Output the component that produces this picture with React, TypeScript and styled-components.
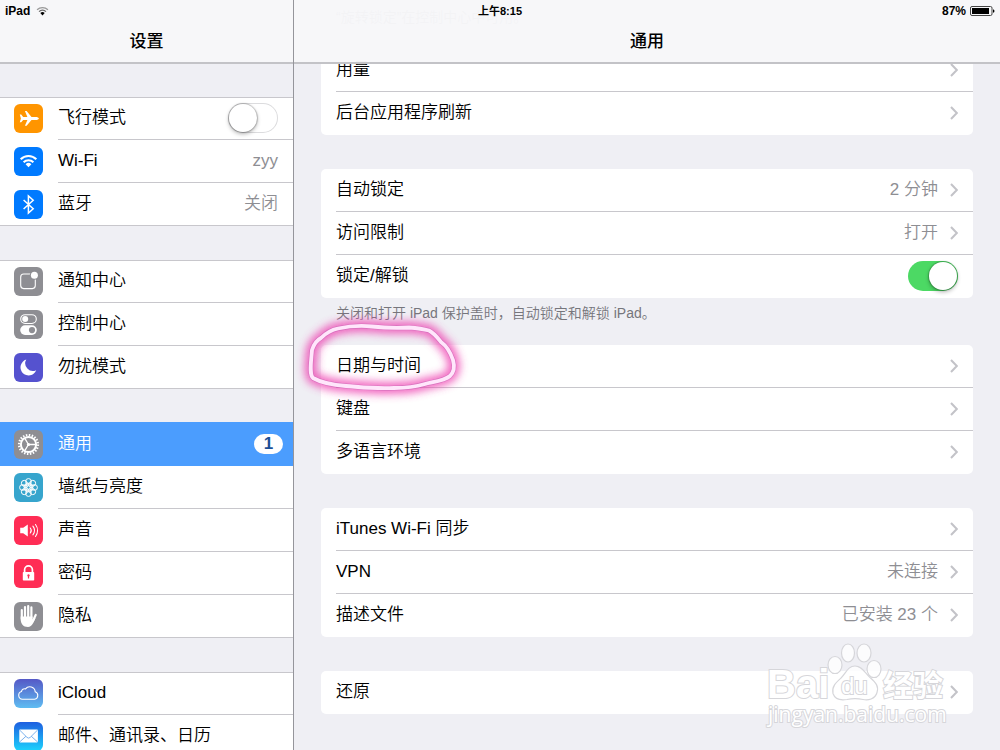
import React, { ReactNode } from 'react';
import styled, { createGlobalStyle } from 'styled-components';

const fontStack = `"Liberation Sans", "Noto Sans CJK SC", sans-serif`;
const line = '#c8c7cc';

const GlobalStyle = createGlobalStyle`
  *, *::before, *::after { box-sizing: border-box; }
  body {
    margin: 0;
    background: #efeff4;
    color: #000;
    font-family: ${fontStack};
    font-size: 17px;
    font-weight: 350;
    line-height: 24px;
  }
  a { color: inherit; text-decoration: none; }
  ul { list-style: none; margin: 0; padding: 0; }
`;

/* ---------- frame ---------- */

const Screen = styled.div`
  position: relative;
  display: grid;
  grid-template-columns: 294px 1fr;
  height: 100vh;
  overflow: hidden;
`;

const StatusBar = styled.div`
  position: absolute;
  inset: 0 0 auto;
  z-index: 3;
  display: grid;
  grid-template-columns: 1fr auto 1fr;
  align-items: center;
  height: 21px;
  padding: 0 5px;
  font-size: 12px;
  font-weight: 700;
  line-height: 16px;
`;

const StatusItem = styled.div<{ $end?: boolean }>`
  display: flex;
  align-items: center;
  justify-content: ${(p) => (p.$end ? 'flex-end' : 'flex-start')};
  gap: ${(p) => (p.$end ? 4 : 6)}px;
`;

const Clock = styled.time`
  font-size: 11px;
`;

const Pane = styled.section<{ $side?: boolean }>`
  position: relative;
  min-width: 0;
  height: 100vh;
  border-right: ${(p) => (p.$side ? '1px solid #95959b' : '0')};
`;

const PaneHeader = styled.header`
  position: absolute;
  inset: 0 0 auto;
  z-index: 2;
  display: flex;
  align-items: flex-end;
  justify-content: center;
  height: 64px;
  padding-bottom: 8px;
  background: rgba(247, 247, 249, 0.97);
  border-bottom: 2px solid #c3c3c7;
`;

const Title = styled.h1`
  margin: 0;
  font-size: 17px;
  font-weight: 500;
  line-height: 24px;
`;

const Scroller = styled.div<{ $side?: boolean }>`
  height: 100%;
  overflow-y: auto;
  scrollbar-width: none;
  padding: ${(p) => (p.$side ? '97px 0 0' : '2px 27px 34px')};
`;

/* ---------- sidebar ---------- */

const SideGroup = styled.ul`
  margin-bottom: 34px;
  background: #fff;
  box-shadow: inset 0 1px 0 ${line}, inset 0 -1px 0 ${line};
`;

const SideItem = styled.li<{ $selected?: boolean }>`
  background: ${(p) => (p.$selected ? '#4b9dfe' : 'transparent')};
  box-shadow: ${(p) => (p.$selected ? '0 -1px 0 #4b9dfe' : 'none')};
  color: ${(p) => (p.$selected ? '#fff' : '#000')};
`;

const SideLink = styled.a`
  display: flex;
  align-items: center;
  gap: 15px;
  padding-left: 14px;
`;

const SideToggleRow = styled(SideLink).attrs({ as: 'label' })``;

const SideBody = styled.span<{ $last?: boolean; $badge?: boolean }>`
  flex: 1;
  display: flex;
  align-items: center;
  justify-content: space-between;
  height: 43px;
  padding-right: ${(p) => (p.$badge ? 10 : 15)}px;
  border-bottom: 1px solid ${(p) => (p.$last ? 'transparent' : line)};
`;

const Value = styled.span`
  color: #8e8e93;
`;

const Badge = styled.span`
  width: 29px;
  height: 20px;
  border-radius: 10px;
  background: #fff;
  color: #1c4f96;
  font-weight: 700;
  line-height: 20px;
  text-align: center;
`;

/* ---------- detail ---------- */

const Card = styled.ul`
  background: #fff;
  border-radius: 5px;

  & + & { margin-top: 34px; }
`;

const CardItem = styled.li`
  position: relative;
  padding-left: 15px;

  &:not(:last-child) > :first-child { border-bottom-color: ${line}; }
`;

const CardLink = styled.a`
  display: flex;
  align-items: center;
  gap: 12px;
  height: 43px;
  padding-right: 15px;
  border-bottom: 1px solid transparent;
`;

const CardToggleRow = styled(CardLink).attrs({ as: 'label' })``;

const Label = styled.span`
  flex: 1;
`;

const Footnote = styled.p`
  margin: 0;
  padding: 6px 15px 23px;
  color: #76767c;
  font-size: 14px;
  line-height: 18px;
`;

const Switch = styled.input.attrs({ type: 'checkbox', role: 'switch' })`
  appearance: none;
  display: flex;
  align-items: center;
  flex: none;
  width: 50px;
  height: 30px;
  margin: 0;
  padding: 0 1px;
  border-radius: 15px;
  background: #fff;
  box-shadow: inset 0 0 0 1px #dcdcde;

  &::before {
    content: '';
    width: 28px;
    height: 28px;
    border-radius: 50%;
    background: #fff;
    box-shadow: 0 0 1px 1px rgba(0, 0, 0, 0.2), 0 2px 4px rgba(0, 0, 0, 0.3);
  }

  &:checked {
    justify-content: flex-end;
    background: #4cd964;
    box-shadow: none;
  }
`;

const Ring = styled.svg`
  position: absolute;
  left: -21px;
  top: -30px;
  z-index: 1;
  width: 180px;
  height: 100px;
  overflow: visible;
  pointer-events: none;
`;

const Watermark = styled.svg`
  position: absolute;
  right: 50px;
  bottom: 14px;
  z-index: 4;
  width: 190px;
  height: 100px;
  pointer-events: none;
`;

/* ---------- icons ---------- */

const IconSvg = styled.svg`
  flex: none;
  display: block;
  width: 29px;
  height: 29px;
`;

function Tile({ fill, to, id, children }: { fill: string; to?: string; id?: string; children: ReactNode }) {
  return (
    <IconSvg viewBox="0 0 29 29" aria-hidden="true">
      {to && (
        <linearGradient id={id} x1="0" y1="0" x2="0" y2="1">
          <stop offset="0" stopColor={fill} />
          <stop offset="1" stopColor={to} />
        </linearGradient>
      )}
      <rect width="29" height="29" rx="6" fill={to ? `url(#${id})` : fill} />
      {children}
    </IconSvg>
  );
}

const PlaneIcon = () => (
  <Tile fill="#ff9500">
    <path
      fill="#fff"
      d="M24.9 14.4c0-.9-1.5-1.5-3.2-1.5h-4.2L12.6 7h-1.7l2.5 5.9H9.2L7.2 10.6H5.8l1.1 3.8-1.1 3.8h1.4l2-2.3h4.2l-2.5 5.9h1.7l4.9-5.9h4.2c1.7 0 3.2-.6 3.2-1.5z"
    />
  </Tile>
);

const WifiIcon = () => (
  <Tile fill="#007aff">
    <g fill="none" stroke="#fff" strokeWidth="2.1">
      <path d="M6.7 12.3a11 11 0 0 1 15.6 0" />
      <path d="M9.6 15.2a7 7 0 0 1 9.8 0" />
    </g>
    <path d="M14.5 20.3l-2.9-3a4.1 4.1 0 0 1 5.8 0z" fill="#fff" />
  </Tile>
);

const BluetoothIcon = () => (
  <Tile fill="#007aff">
    <path d="M9.6 10l9.6 8.8-4.8 4.2V6l4.8 4.2L9.6 19" fill="none" stroke="#fff" strokeWidth="1.5" />
  </Tile>
);

const NoticeIcon = () => (
  <Tile fill="#8e8e93">
    <rect x="6.7" y="7" width="14.6" height="14.6" rx="3" fill="none" stroke="#fff" strokeWidth="1.1" />
    <circle cx="20.4" cy="8.2" r="4.6" fill="#8e8e93" />
    <circle cx="20.4" cy="8.2" r="3.5" fill="#fff" />
  </Tile>
);

const ControlIcon = () => (
  <Tile fill="#8e8e93">
    <rect x="6.7" y="4.7" width="15.6" height="8.8" rx="4.4" fill="none" stroke="#fff" strokeWidth="1.1" />
    <circle cx="11.2" cy="9.1" r="3" fill="#fff" />
    <rect x="6.2" y="15.3" width="16.6" height="9.6" rx="4.8" fill="#fff" />
    <circle cx="18" cy="20.1" r="3.1" fill="#8e8e93" />
  </Tile>
);

const MoonIcon = () => (
  <Tile fill="#5552cf">
    <path d="M12.3 6.6a8.1 8.1 0 1 0 9.9 10.6A7.6 7.6 0 0 1 12.3 6.6z" fill="#fff" />
  </Tile>
);

const GearIcon = () => (
  <Tile fill="#8e8e93">
    <g fill="none" stroke="#fff">
      <circle cx="14.5" cy="14.5" r="9.4" strokeWidth="2.4" strokeDasharray="1.48 1.473" />
      <circle cx="14.5" cy="14.5" r="7.6" strokeWidth="2" />
      <path d="M14.5 14.5h7M14.5 14.5l-3.7-6.2M14.5 14.5l-3.7 6.2" strokeWidth="1.3" />
    </g>
    <circle cx="14.5" cy="14.5" r="1.6" fill="#fff" />
  </Tile>
);

const petals = Array.from({ length: 8 }, (_, i) => (i * Math.PI) / 4);

const FlowerIcon = () => (
  <Tile fill="#37a5cd">
    <g fill="none" stroke="#fff" strokeWidth="1">
      {petals.map((a) => (
        <circle key={a} cx={14.5 + 6 * Math.cos(a)} cy={14.5 + 6 * Math.sin(a)} r="2.9" />
      ))}
      {petals.map((a) => (
        <circle key={a} cx={14.5 + 3.2 * Math.cos(a + 0.39)} cy={14.5 + 3.2 * Math.sin(a + 0.39)} r="1.7" />
      ))}
    </g>
  </Tile>
);

const SoundIcon = () => (
  <Tile fill="#ff2d55">
    <path d="M6.2 11.8h3l4.6-3.4v12.2l-4.6-3.4h-3z" fill="#fff" />
    <g fill="none" stroke="#fff" strokeWidth="1.1" strokeLinecap="round">
      <path d="M16.3 12a4 4 0 0 1 0 5" />
      <path d="M18.9 10.2a7 7 0 0 1 0 8.6" />
      <path d="M21.5 8.5a10 10 0 0 1 0 12" />
    </g>
  </Tile>
);

const LockIcon = () => (
  <Tile fill="#ff2d55">
    <path d="M10.6 14v-3.2a3.9 3.9 0 0 1 7.8 0V14" fill="none" stroke="#fff" strokeWidth="1.7" />
    <rect x="8.8" y="13" width="11.4" height="8.6" rx="0.8" fill="#fff" />
    <path d="M14.5 15.2a1.3 1.3 0 0 1 .6 2.4v2h-1.2v-2a1.3 1.3 0 0 1 .6-2.4z" fill="#ff2d55" />
  </Tile>
);

const HandIcon = () => (
  <Tile fill="#8e8e93">
    <g stroke="#fff" strokeWidth="2.2" strokeLinecap="round" fill="none">
      <path d="M7.8 8.2V17M11 5V16M14.2 4V16M17.4 5.4V16" />
      <path d="M21.7 13l-2.6 5.4" />
    </g>
    <path d="M6.7 14.5h11.8v3l2.1-2 .9.6c-1.7 3.6-3 8.9-7.5 8.9-5 0-7.3-3.5-7.3-8z" fill="#fff" />
  </Tile>
);

const CloudIcon = () => (
  <Tile fill="#5558c6" to="#5fbdf2" id="cloudFill">
    <path
      d="M8.4 20.3a4 4 0 0 1-.9-7.8 3 3 0 0 1 4-2.6 5.4 5.4 0 0 1 9.7 2.9 3.9 3.9 0 0 1-.6 7.5z"
      fill="none"
      stroke="#fff"
      strokeWidth="1.1"
    />
  </Tile>
);

const MailIcon = () => (
  <Tile fill="#1e5fe0" to="#1cd3fd" id="mailFill">
    <rect x="5.3" y="7.6" width="18.6" height="12.8" rx="0.8" fill="#fff" />
    <path
      d="M5.6 8l7.4 7.4q1.6 1.4 3.2 0L23.6 8M5.6 20l6.3-5.7M23.6 20l-6.3-5.7"
      fill="none"
      stroke="#5a9ee8"
      strokeWidth="0.8"
    />
  </Tile>
);

const StatusWifi = () => (
  <svg width="13" height="10" viewBox="0 0 12 9" aria-hidden="true">
    <path d="M1 3.3a7.3 7.3 0 0 1 10 0" fill="none" stroke="#999" strokeWidth="1.2" />
    <path d="M2.8 5.1a4.6 4.6 0 0 1 6.4 0" fill="none" stroke="#666" strokeWidth="1.2" />
    <path d="M6 8.6L4 6.4a2.9 2.9 0 0 1 4 0z" fill="#000" />
  </svg>
);

const Battery = () => (
  <svg width="25" height="10" viewBox="0 0 25 10" aria-hidden="true">
    <rect x="0.5" y="0.5" width="21.5" height="9" rx="1.5" fill="none" stroke="#444" />
    <rect x="2" y="2" width="17" height="6" fill="#000" />
    <path d="M23 3.2q1.5.4 1.5 1.8T23 6.8z" fill="#000" />
  </svg>
);

const Chevron = () => (
  <svg width="8" height="14" viewBox="0 0 8 14" aria-hidden="true">
    <path d="M1 1l5.8 6L1 13" fill="none" stroke="#c3c3c8" strokeWidth="2" />
  </svg>
);

const MarkerRing = () => {
  const d =
    'M12 35C14 29 17 25 21 23C27 17 33 14.5 38 13.5C52 10.5 62 10.5 72 11.5C86 13 98 13 109 12.5C120 13.5 127 15 129 15.5C134 18 137 22 141 27C148 32 151 39 153 45C155 52 154 57 150 61C144 66 132 67 125 69C115 72 104 73 94 73C74 74 60 72 46 71C33 70 20 67 13 63C9 59 11 48 12 35Z';
  return (
    <Ring viewBox="0 0 180 100" aria-hidden="true">
      <defs>
        <filter id="glow" x="-20%" y="-30%" width="140%" height="160%">
          <feGaussianBlur stdDeviation="4" />
        </filter>
      </defs>
      <path d={d} fill="none" stroke="#ee3fb0" strokeWidth="12" opacity="0.8" filter="url(#glow)" />
      <path d={d} fill="none" stroke="#c766b4" strokeWidth="5" strokeLinejoin="round" opacity="0.6" />
      <path d={d} fill="none" stroke="#ffe6fb" strokeWidth="3.8" strokeLinejoin="round" />
    </Ring>
  );
};

const BrandMark = () => (
  <Watermark viewBox="0 0 190 100" aria-hidden="true">
    <g fill="#fff" fillOpacity="0.8" stroke="#d6d6da" strokeWidth="1.2" fontFamily={fontStack}>
      <ellipse cx="75" cy="29" rx="7" ry="8.5" />
      <ellipse cx="88" cy="17" rx="6.5" ry="9" />
      <ellipse cx="104" cy="17" rx="7" ry="9" />
      <ellipse cx="114" cy="33" rx="7" ry="8.5" />
      <path d="M95 30c7 0 10 7 15 11.5 6 5 9 9 7 15-2 7-9 8-14 7-5-1-11-1-16 0-6 1-12 0-14-6-1.5-7 3-11 8-15.5C86 37 88 30 95 30z" />
      <g paintOrder="stroke" strokeWidth="2" fillOpacity="1">
        <text x="7" y="62" fontSize="40" fontWeight="700">Bai</text>
        <text x="81" y="58" fontSize="24">du</text>
        <text x="123" y="60" fontSize="30" fontWeight="700">经验</text>
        <text x="8" y="86" fontSize="21" fontWeight="400" fontFamily={`"Open Sans", "Noto Sans", sans-serif`}>
          jingyan.baidu.com
        </text>
      </g>
    </g>
  </Watermark>
);

/* ---------- data ---------- */

type SideEntry = { label: string; icon: ReactNode; value?: string; badge?: string; toggle?: boolean; selected?: boolean };
type DetailEntry = { label: string; value?: string; toggle?: boolean; marked?: boolean };

const sideGroups: SideEntry[][] = [
  [
    { label: '飞行模式', icon: <PlaneIcon />, toggle: true },
    { label: 'Wi-Fi', icon: <WifiIcon />, value: 'zyy' },
    { label: '蓝牙', icon: <BluetoothIcon />, value: '关闭' },
  ],
  [
    { label: '通知中心', icon: <NoticeIcon /> },
    { label: '控制中心', icon: <ControlIcon /> },
    { label: '勿扰模式', icon: <MoonIcon /> },
  ],
  [
    { label: '通用', icon: <GearIcon />, badge: '1', selected: true },
    { label: '墙纸与亮度', icon: <FlowerIcon /> },
    { label: '声音', icon: <SoundIcon /> },
    { label: '密码', icon: <LockIcon /> },
    { label: '隐私', icon: <HandIcon /> },
  ],
  [
    { label: 'iCloud', icon: <CloudIcon /> },
    { label: '邮件、通讯录、日历', icon: <MailIcon /> },
  ],
];

const detailGroups: { rows: DetailEntry[]; note?: string }[] = [
  { rows: [{ label: '用量' }, { label: '后台应用程序刷新' }] },
  {
    rows: [
      { label: '自动锁定', value: '2 分钟' },
      { label: '访问限制', value: '打开' },
      { label: '锁定/解锁', toggle: true },
    ],
    note: '关闭和打开 iPad 保护盖时，自动锁定和解锁 iPad。',
  },
  { rows: [{ label: '日期与时间', marked: true }, { label: '键盘' }, { label: '多语言环境' }] },
  { rows: [{ label: 'iTunes Wi-Fi 同步' }, { label: 'VPN', value: '未连接' }, { label: '描述文件', value: '已安装 23 个' }] },
  { rows: [{ label: '还原' }] },
];

function SideRow({ entry, last }: { entry: SideEntry; last: boolean }) {
  const body = (
    <>
      {entry.icon}
      <SideBody $last={last || entry.selected} $badge={!!entry.badge}>
        <span>{entry.label}</span>
        {entry.value && <Value>{entry.value}</Value>}
        {entry.badge && <Badge>{entry.badge}</Badge>}
        {entry.toggle && <Switch />}
      </SideBody>
    </>
  );
  return (
    <SideItem $selected={entry.selected}>
      {entry.toggle ? <SideToggleRow>{body}</SideToggleRow> : <SideLink href="#">{body}</SideLink>}
    </SideItem>
  );
}

function DetailRow({ entry }: { entry: DetailEntry }) {
  return (
    <CardItem>
      {entry.toggle ? (
        <CardToggleRow>
          <Label>{entry.label}</Label>
          <Switch defaultChecked />
        </CardToggleRow>
      ) : (
        <CardLink href="#">
          <Label>{entry.label}</Label>
          {entry.value && <Value>{entry.value}</Value>}
          <Chevron />
        </CardLink>
      )}
      {entry.marked && <MarkerRing />}
    </CardItem>
  );
}

export default function App() {
  return (
    <Screen>
      <GlobalStyle />
      <StatusBar>
        <StatusItem>
          iPad <StatusWifi />
        </StatusItem>
        <Clock>上午8:15</Clock>
        <StatusItem $end>
          87% <Battery />
        </StatusItem>
      </StatusBar>

      <Pane $side>
        <PaneHeader>
          <Title>设置</Title>
        </PaneHeader>
        <Scroller $side>
          {sideGroups.map((group) => (
            <SideGroup key={group[0].label}>
              {group.map((entry, i) => (
                <SideRow key={entry.label} entry={entry} last={i === group.length - 1} />
              ))}
            </SideGroup>
          ))}
        </Scroller>
      </Pane>

      <Pane>
        <PaneHeader>
          <Title as="h2">通用</Title>
        </PaneHeader>
        <Scroller>
          <Footnote>“旋转锁定”在控制中心中可用。</Footnote>
          {detailGroups.map((group) => (
            <React.Fragment key={group.rows[0].label}>
              <Card>
                {group.rows.map((entry) => (
                  <DetailRow key={entry.label} entry={entry} />
                ))}
              </Card>
              {group.note && <Footnote>{group.note}</Footnote>}
            </React.Fragment>
          ))}
        </Scroller>
      </Pane>

      <BrandMark />
    </Screen>
  );
}
